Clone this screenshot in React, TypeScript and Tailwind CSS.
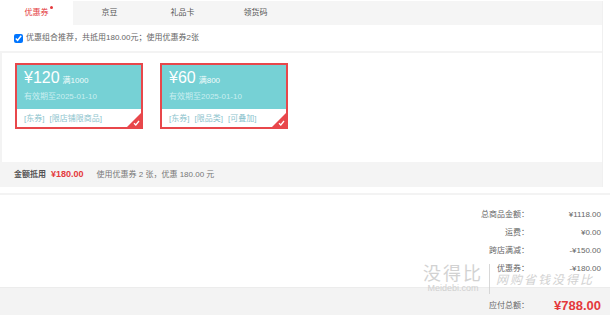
import React from "react";

const font = { fontFamily: '"Liberation Sans", "Noto Sans CJK SC", sans-serif' };

function Coupon({ amount, cond, tags }: { amount: string; cond: string; tags: string[] }) {
  return (
    <div className="relative w-[128px] h-[66px] border-2 border-[#e8474b] flex flex-col overflow-hidden">
      <div className="h-[44px] bg-[#76d1d5] pl-[7px] pt-[2px] text-white">
        <div className="flex items-baseline gap-[3px] h-[22px]">
          <span className="text-[16px] leading-[22px]">¥{amount}</span>
          <span className="text-[8px] leading-[10px] text-[#f2fbfb]">{cond}</span>
        </div>
        <div className="text-[8px] leading-[14px] mt-[1px] text-[#c9eef0]">有效期至2025-01-10</div>
      </div>
      <div className="flex-1 bg-white flex items-center pl-[7px] pt-[2px] gap-[5px] text-[8px] text-[#8cc3cd]">
        {tags.map((t) => (
          <span key={t}>[{t}]</span>
        ))}
      </div>
      <div className="absolute right-0 bottom-0 w-0 h-0 border-l-[14px] border-l-transparent border-b-[14px] border-b-[#e8474b]" />
      <svg className="absolute right-[1px] bottom-[1px]" width="7" height="6" viewBox="0 0 7 6">
        <path d="M1 3.2 L2.8 5 L6 1" stroke="white" strokeWidth="1.3" fill="none" />
      </svg>
    </div>
  );
}

export default function App() {
  return (
    <div className="relative w-[610px] h-[315px] bg-white overflow-hidden text-[#666]" style={font}>
      <div className="w-[603px] border-r border-[#f0f0f0]">
        <div className="mt-[1px] h-[24px] bg-[#f5f5f5] flex text-[8px] text-[#555]">
          <div className="w-[73px] bg-white flex items-center justify-center text-[#e4393c]">
            <span className="relative">
              优惠券
              <span className="absolute -right-[4px] -top-[1px] w-[3px] h-[3px] rounded-full bg-[#e4393c]" />
            </span>
          </div>
          <div className="w-[73px] flex items-center justify-center">京豆</div>
          <div className="w-[73px] flex items-center justify-center">礼品卡</div>
          <div className="w-[73px] flex items-center justify-center">领货码</div>
        </div>
        <div className="h-[28px] flex items-center pl-[14px] gap-[3px] text-[8px] text-[#666] border-b-2 border-[#f3f3f3]">
          <input type="checkbox" defaultChecked className="w-[9px] h-[9px] m-0" />
          <span>优惠组合推荐，共抵用180.00元；使用优惠券2张</span>
        </div>
        <div className="h-[109px] border-l-2 border-[#f3f3f3] flex gap-[17px] pl-[13px] pt-[10px]">
          <Coupon amount="120" cond="满1000" tags={["东券", "限店铺限商品"]} />
          <Coupon amount="60" cond="满800" tags={["东券", "限品类", "可叠加"]} />
        </div>
        <div className="h-[25px] bg-[#f4f4f4] flex items-center pl-[14px] text-[8px]">
          <span className="font-bold text-[#555]">金额抵用</span>
          <span className="ml-[5px] font-bold text-[#e4393c] text-[9px]">¥180.00</span>
          <span className="ml-[13px] text-[#777]">使用优惠券 2 张，优惠 180.00 元</span>
        </div>
      </div>
      <div className="mt-[6px] border-t-2 border-[#f3f3f3] pt-[11px] pb-[9px] text-[8px] text-[#666]">
        {[
          ["总商品金额：", "¥1118.00"],
          ["运费：", "¥0.00"],
          ["跨店满减：", "-¥150.00"],
          ["优惠券：", "-¥180.00"],
        ].map(([l, v]) => (
          <div key={l} className="h-[18px] flex items-center justify-end pr-[9px]">
            <span className="text-right">{l}</span>
            <span className="w-[72px] text-right">{v}</span>
          </div>
        ))}
      </div>
      <div className="h-[36px] bg-[#f3f3f3] border-t border-[#ececec] flex items-center justify-end pr-[9px] text-[8px] text-[#666]">
        <span>应付总额：</span>
        <span className="w-[72px] text-right text-[13px] font-bold text-[#e4393c]">¥788.00</span>
      </div>
      <div className="absolute left-[423px] top-[262px] pointer-events-none flex items-start gap-[6px] text-[#c8c8c8] opacity-80">
        <div className="flex flex-col items-center">
          <span className="text-[18px] leading-[21px] tracking-[2px]" style={{ fontFamily: '"Noto Sans CJK SC", sans-serif' }}>没得比</span>
          <span className="text-[9px] leading-[10px]">Meidebi.com</span>
        </div>
        <div className="w-px h-[30px] bg-[#cfcfcf] mt-[2px]" />
        <span className="text-[12px] leading-[14px] mt-[10px] italic tracking-[2px]" style={{ fontFamily: '"Noto Sans CJK SC", sans-serif' }}>网购省钱没得比</span>
      </div>
    </div>
  );
}
